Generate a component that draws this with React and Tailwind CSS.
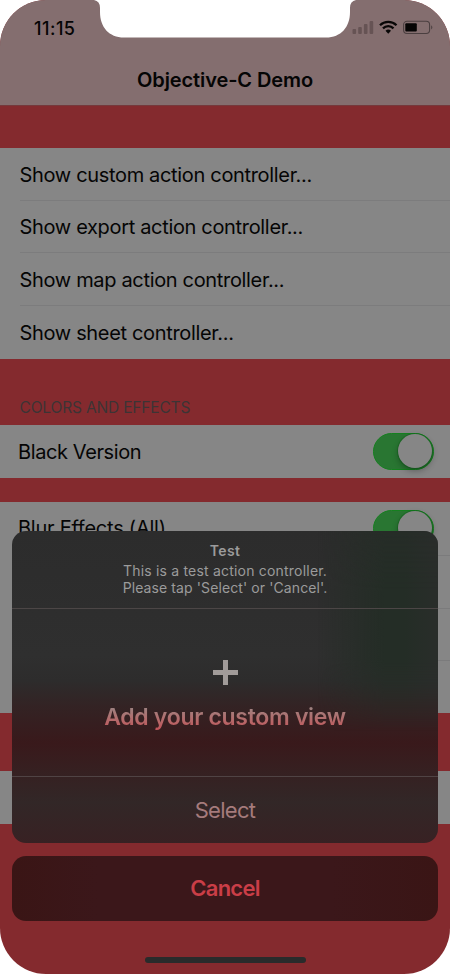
const actions = [
  "Show custom action controller...",
  "Show export action controller...",
  "Show map action controller...",
  "Show sheet controller...",
];

function Switch() {
  return (
    <span className="flex h-[37px] w-[61px] shrink-0 items-center justify-end rounded-full border border-[#15801f] bg-[#297632] pr-px">
      <span className="h-[34px] w-[34px] rounded-full bg-[#868686] shadow-[0_3px_6px_rgba(0,0,0,0.3),0_0_0_1px_rgba(10,100,20,0.35)]" />
    </span>
  );
}

function StatusIcons() {
  return (
    <svg className="h-[15px] w-[82px]" viewBox="0 0 82 15" fill="none">
      <g fill="#665354">
        <rect x="0.5" y="9" width="3.6" height="5" rx="1" />
        <rect x="6.2" y="7" width="3.6" height="7" rx="1" />
        <rect x="11.9" y="4" width="3.6" height="10" rx="1" />
        <rect x="17.6" y="1" width="3.6" height="13" rx="1" />
      </g>
      <g stroke="#080606" strokeWidth="2.3">
        <path d="M28 5.3A11.7 11.7 0 0 1 44.5 5.3" />
        <path d="M31 8.4A7.4 7.4 0 0 1 41.5 8.4" />
      </g>
      <path d="M33.5 10.8A4.1 4.1 0 0 1 39 10.8L36.25 13.8Z" fill="#080606" />
      <rect x="51.6" y="1.3" width="26" height="12.2" rx="3.4" stroke="#4b3f40" strokeWidth="1.1" />
      <rect x="53.3" y="3.2" width="11.5" height="8.4" rx="1" fill="#050404" />
      <path d="M79.2 5.2Q81.5 7.4 79.2 9.6Z" fill="#4b3f40" />
    </svg>
  );
}

export default function App() {
  return (
    <div className="h-[974px] w-[450px] overflow-hidden bg-white font-['Inter','Liberation_Sans',sans-serif]">
      <div className="relative flex h-full flex-col overflow-hidden rounded-[46px] bg-[#842a2e] text-[20px] text-[#050505]">
        <header className="flex h-[106px] shrink-0 flex-col border-b border-[#75393c] bg-[#846e6f]">
          <div className="flex h-[55px] items-center justify-between pr-4 pl-[34px]">
            <span className="pt-px text-[18px] font-medium tracking-[0.5px]">11:15</span>
            <StatusIcons />
          </div>
          <h1 className="text-center text-[20px] leading-[50px] font-semibold tracking-[-0.1px]">Objective-C Demo</h1>
        </header>

        <section className="mt-[42px] h-[210.5px] shrink-0 bg-[#868686] pl-[19.5px]">
          {actions.map((label, i) => (
            <div
              key={label}
              className={`flex h-[52.7px] items-center pt-[1.5px] tracking-[-0.33px] ${i < 3 ? "border-b border-[#7c7c7d]" : ""}`}
            >
              {label}
            </div>
          ))}
        </section>

        <h2 className="flex h-[66.5px] shrink-0 items-end pb-[6px] pl-[19.5px] text-[15.5px] tracking-[-0.17px] text-[#3c3435]">
          COLORS AND EFFECTS
        </h2>
        <section className="flex h-[52.5px] shrink-0 items-center justify-between bg-[#868686] pr-4 pl-[18px]">
          <span className="pt-px tracking-[-0.4px]">Black Version</span>
          <Switch />
        </section>
        <section className="mt-[24px] h-[211.5px] shrink-0 bg-[#868686]">
          <div className="flex h-[53px] items-center justify-between pr-4 pl-[18px]">
            <span className="tracking-[-0.24px]">Blur Effects (All)</span>
            <Switch />
          </div>
          <div className="ml-[19px] h-[53px] border-t border-[#7b7b7c]" />
          <div className="ml-[19px] h-[52.5px] border-t border-[#7b7b7c]" />
          <div className="ml-[19px] h-[53px] border-t border-[#7b7b7c]" />
        </section>
        <section className="mt-[57.5px] h-[53px] shrink-0 bg-[#868686]" />

        <div className="absolute inset-x-0 top-0 flex justify-center">
          <svg className="h-[38px] w-[262px]" viewBox="0 0 262 38">
            <path d="M0 0Q6 1 6 8V12C6 27 15 37.5 30 37.5H232C247 37.5 256 27 256 12V8Q256 1 262 0Z" fill="#fff" />
          </svg>
        </div>

        <div className="absolute inset-x-3 bottom-0 flex h-[443px] flex-col items-center">
          <div className="relative flex h-[312px] w-full shrink-0 flex-col overflow-hidden rounded-[14px] bg-[linear-gradient(#2c2c2c_0%,#2f2f2f_40%,#2d2c2c_48%,#332324_56%,#39191b_68%,#362021_77%,#322727_87%,#382123_100%)] text-center">
            <div className="absolute top-0 right-0 h-[200px] w-[120px] bg-[linear-gradient(90deg,transparent,#242d26_55%,#242d26_72%,#292d2a)] [mask-image:linear-gradient(#000b,#000_30%,#000_65%,transparent)]" />
            <div className="relative h-[78px] shrink-0 border-b border-[#4c4646] pt-[11px] text-[#9b9b9b]">
              <p className="text-[14px] leading-[18px] font-semibold tracking-[0.3px]">Test</p>
              <p className="mt-[2px] text-[14px] leading-[17px] tracking-[0.2px]">
                This is a test action controller.
                <br />
                <span className="tracking-[0.1px]">Please tap 'Select' or 'Cancel'.</span>
              </p>
            </div>
            <div className="relative flex h-[168px] shrink-0 flex-col items-center border-b border-[#504344] pt-[50px]">
              <svg className="h-[27px] w-[27px]" viewBox="0 0 27 27">
                <path d="M11 1h5v10h10v5H16v10h-5V16H1v-5h10Z" fill="#a19b99" />
              </svg>
              <p className="mt-[15px] bg-linear-to-b from-[#9c8281] from-20% to-[#c35359] to-90% bg-clip-text text-[23px] leading-[32px] font-semibold tracking-[-0.3px] text-transparent">
                Add your custom view
              </p>
            </div>
            <p className="relative shrink-0 text-[22px] leading-[66px] tracking-[-0.7px] text-[#a57b7c]">Select</p>
          </div>
          <div className="mt-[12.5px] flex h-[65.5px] w-full shrink-0 items-center justify-center rounded-[14px] bg-[linear-gradient(90deg,#3a1515,#3b171a_20%,#3b171a_75%,#3a1515)] text-[22px] font-semibold tracking-[-0.75px] text-[#ca3e47]">
            Cancel
          </div>
          <div className="mt-[36px] h-[6px] w-[161px] shrink-0 rounded-full bg-[#292b2b]" />
        </div>
      </div>
    </div>
  );
}
